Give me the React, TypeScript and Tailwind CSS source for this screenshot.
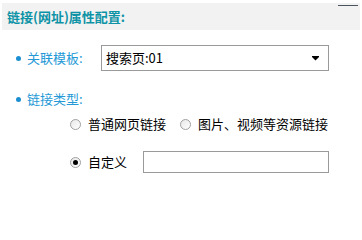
import React from "react";

const Radio = ({ checked }: { checked?: boolean }) => (
  <span className="relative inline-flex h-[11px] w-[11px] shrink-0 items-center justify-center rounded-full border border-[#a0a0a0] bg-gradient-to-br from-[#e8e8e8] to-white">
    {checked && <span className="h-[5px] w-[5px] rounded-full bg-black" />}
  </span>
);

export default function App() {
  return (
    <div
      className="relative h-[223px] w-[362px] bg-white text-[13px] leading-[18px]"
      style={{ fontFamily: '"Noto Sans CJK SC", "Noto Sans", sans-serif' }}
    >
      <div className="absolute right-[4px] top-[2px] h-[1px] w-[20px] bg-[#4a545e]" />
      <div className="mx-[2px] mt-[3px] flex h-[27px] items-center bg-[#f2f2f2] pl-[5px] font-bold text-[#0e93a6]">
        链接(网址)属性配置:
      </div>

      <div className="mt-[15px] flex h-[26px] items-center pl-[16px]">
        <span className="h-[5px] w-[5px] rounded-full bg-[#1a8fd2]" />
        <span className="ml-[6px] w-[74px] text-[#2499d6]">关联模板:</span>
        <div className="flex h-[26px] w-[228px] items-center justify-between border border-[#9a9a9a] pl-[4px] pr-[9px] text-black">
          <span>搜索页:01</span>
          <svg width="7" height="5" viewBox="0 0 7 5">
            <rect x="0" y="0" width="7" height="1" fill="#000" />
            <path d="M0 1 H7 L3.5 4.5 Z" fill="#000" />
          </svg>
        </div>
      </div>

      <div className="mt-[19px] flex h-[18px] items-center pl-[16px]">
        <span className="h-[5px] w-[5px] rounded-full bg-[#1a8fd2]" />
        <span className="ml-[6px] text-[#2499d6]">链接类型:</span>
      </div>

      <div className="mt-[7px] flex h-[18px] items-center pl-[70px] text-black">
        <Radio />
        <span className="ml-[7px]">普通网页链接</span>
        <span className="ml-[14px] flex">
          <Radio />
        </span>
        <span className="ml-[7px]">图片、视频等资源链接</span>
      </div>

      <div className="mt-[18px] flex h-[22px] items-center pl-[70px] text-black">
        <Radio checked />
        <span className="ml-[7px] w-[55px]">自定义</span>
        <div className="h-[22px] w-[186px] border border-[#9a9a9a] bg-white" />
      </div>
    </div>
  );
}
